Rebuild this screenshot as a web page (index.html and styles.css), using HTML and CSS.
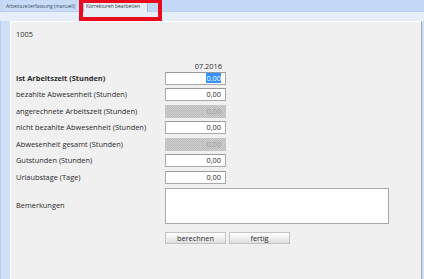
FILE: index.html
```html
<!DOCTYPE html>
<html lang="de">
<head>
<meta charset="utf-8">
<link rel="stylesheet" href="styles.css">
</head>
<body>
<div class="app">
  <div class="tabbar">
    <div class="tab first">Arbeitszeiterfassung (manuell)</div>
    <div class="tab active">Korrekturen bearbeiten</div>
    <div class="highlight"></div>
  </div>
  <div class="band"></div>
  <div class="main">
    <div class="strip"></div>
    <div class="panel">
      <div class="id">1005</div>
      <div class="form">
        <div class="label head"></div>
        <div class="month">07.2016</div>
        <div class="label bold">Ist Arbeitszeit (Stunden)</div>
        <div class="field"><span class="sel">0,00</span></div>
        <div class="label">bezahlte Abwesenheit (Stunden)</div>
        <div class="field">0,00</div>
        <div class="label">angerechnete Arbeitszeit (Stunden)</div>
        <div class="field disabled">0,00</div>
        <div class="label">nicht bezahlte Abwesenheit (Stunden)</div>
        <div class="field">0,00</div>
        <div class="label">Abwesenheit gesamt (Stunden)</div>
        <div class="field disabled">0,00</div>
        <div class="label">Gutstunden (Stunden)</div>
        <div class="field">0,00</div>
        <div class="label">Urlaubstage (Tage)</div>
        <div class="field">0,00</div>
        <div class="label">Bemerkungen</div>
        <div class="memo"></div>
        <div class="label head"></div>
        <div class="buttons">
          <div class="btn">berechnen</div>
          <div class="btn">fertig</div>
        </div>
      </div>
    </div>
    <div class="strip-r"></div>
  </div>
</div>
</body>
</html>
```
FILE: styles.css
```css
html, body {
  margin: 0;
  padding: 0;
  width: 424px;
  height: 279px;
  overflow: hidden;
  background: #c9dcf6;
  font-family: "Open Sans", "Noto Sans", sans-serif;
  color: #2b2b2b;
}
.app {
  display: flex;
  flex-direction: column;
  height: 279px;
}
.tabbar {
  position: relative;
  height: 12px;
  background: #c3d9f7;
  display: flex;
  align-items: flex-end;
  padding-left: 3px;
  border-bottom: 1px solid #b8cfee;
  box-sizing: border-box;
}
.tab {
  font-size: 4.9px;
  color: #3a4a66;
  height: 10px;
  line-height: 10px;
  padding: 0 2px;
  border-right: 1px solid #9fb8dc;
  background: #c8dcf7;
  white-space: nowrap;
  overflow: hidden;
}
.tab.first {
  width: 78px;
  box-sizing: border-box;
  padding-left: 3px;
}
.tab.active {
  width: 65px;
  box-sizing: border-box;
  background: #e6eef8;
  color: #334;
  height: 11px;
  margin-bottom: -1px;
  border-left: 1px solid #9fb8dc;
  padding: 0 0 0 2px;
  margin-left: 2px;
}
.highlight {
  position: absolute;
  left: 79px;
  top: -1px;
  width: 83px;
  height: 22px;
  border: 4px solid #ea0a1e;
  box-sizing: border-box;
}
.band {
  height: 9px;
  background: #e6eef8;
}
.main {
  flex: 1;
  display: flex;
}
.strip {
  width: 10px;
  background: #cde0f7;
  border-left: 1px solid #b6cdee;
  box-sizing: border-box;
}
.strip-r {
  width: 2px;
  background: #cde0f7;
}
.panel {
  flex: 1;
  background: #f0f0f0;
  border-top: 1px solid #ffffff;
  border-left: 1px solid #ffffff;
  border-right: 1px solid #a8a8a8;
  padding: 6px 0 0 5px;
  font-size: 7.4px;
}
.id {
  height: 12px;
  line-height: 12px;
}
.form {
  margin-top: 22px;
  display: grid;
  grid-template-columns: 149px 61px;
  row-gap: 3.58px;
  align-items: center;
}
.label {
  height: 13px;
  line-height: 13px;
  white-space: nowrap;
}
.label.head {
  height: 0;
}
.label.bold {
  font-weight: bold;
}
.form > .month {
  text-align: right;
  padding-right: 4px;
  align-self: end;
  height: 8px;
  line-height: 8px;
  margin-bottom: -2px;
}
.field {
  height: 13px;
  box-sizing: border-box;
  background: #ffffff;
  border: 1px solid #a9a9a9;
  border-top-color: #9a9a9a;
  text-align: right;
  padding-right: 4px;
  line-height: 11px;
}
.field.disabled {
  background: repeating-conic-gradient(#bdbdbd 0 25%, #cdcdcd 0 50%) 0 0 / 2px 2px;
  border-color: #c6c6c6;
  color: #9a9a9a;
}
.sel {
  background: #3390ff;
  color: #ffffff;
}
.memo {
  height: 36.5px;
  width: 224px;
  box-sizing: border-box;
  background: #ffffff;
  border: 1px solid #a9a9a9;
}
.buttons {
  display: flex;
  gap: 3px;
  margin-top: 4px;
}
.btn {
  width: 61px;
  height: 12.5px;
  flex: none;
  box-sizing: border-box;
  border: 1px solid #c4c4c4;
  background: linear-gradient(#ffffff, #f2f2f2 45%, #dcdcdc);
  text-align: center;
  line-height: 10.5px;
}
```
